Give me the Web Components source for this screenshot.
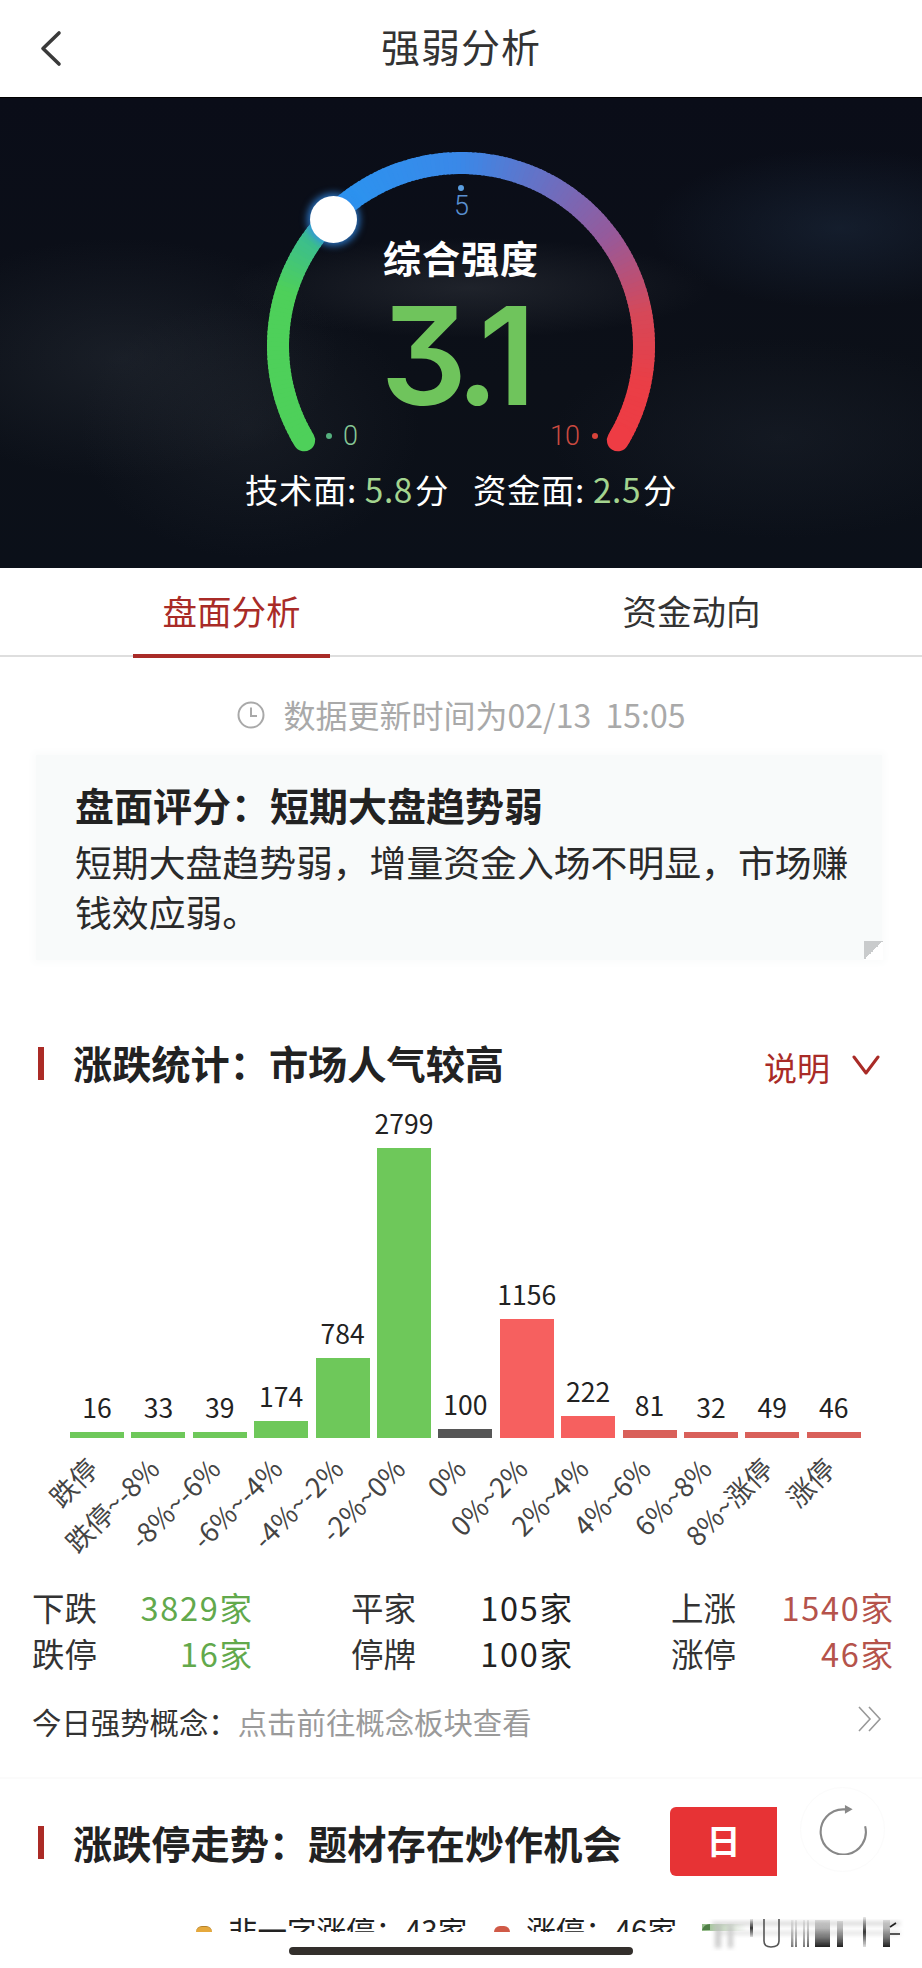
<!DOCTYPE html>
<html lang="zh-CN">
<head>
<meta charset="utf-8">
<title>强弱分析</title>
<style>
html,body{margin:0;padding:0;background:#fff}
body{width:922px;height:1968px;overflow:hidden;font-family:"Noto Sans CJK SC","Noto Sans",sans-serif;color:#222}
</style>
</head>
<body>
<app-header>强弱分析</app-header>
<strength-gauge></strength-gauge>
<tab-bar></tab-bar>
<update-time>数据更新时间为02/13  15:05</update-time>
<score-card heading="盘面评分：短期大盘趋势弱">短期大盘趋势弱，增量资金入场不明显，市场赚钱效应弱。</score-card>
<section-head style="margin-top:78px">涨跌统计：市场人气较高<explain-toggle slot="side"></explain-toggle></section-head>
<updown-chart></updown-chart>
<stats-grid></stats-grid>
<concept-link></concept-link>
<section-head class="second" style="margin-top:28px;height:69px" nudge="1">涨跌停走势：题材存在炒作机会<period-controls slot="side"></period-controls></section-head>
<legend-strip></legend-strip>
<home-bar></home-bar>

<script>
function define(tag, css, html, init){
  customElements.define(tag, class extends HTMLElement{
    constructor(){
      super();
      this.attachShadow({mode:'open'}).innerHTML = '<style>'+css+'</style>'+(typeof html==='function'?html():html);
    }
    connectedCallback(){ if(init) init(this, this.shadowRoot); }
  });
}

define('app-header',
  ':host{display:grid;grid-template-columns:1fr auto 1fr;align-items:center;height:97px;background:#fff}'+
  '.back{padding-left:39px;display:flex}'+
  '.t{font-size:39px;line-height:91px;padding-bottom:6px;color:#333;letter-spacing:1px}',
  '<div class="back"><svg width="24" height="38" viewBox="0 0 24 38"><path d="M20 3 L4 18.5 L20 34" fill="none" stroke="#3a3a3a" stroke-width="3.6" stroke-linecap="round" stroke-linejoin="round"/></svg></div><div class="t"><slot></slot></div><div></div>');

define('strength-gauge',
  ':host{display:flex;flex-direction:column;align-items:center;position:relative;height:471px;box-sizing:border-box;padding-top:134px;overflow:hidden;color:#fff;'+
  'background:radial-gradient(ellipse 240px 50px at 470px 190px,rgba(76,80,86,.30),transparent),'+
  'radial-gradient(ellipse 220px 120px at 120px 260px,rgba(60,68,78,.28),transparent),'+
  'radial-gradient(ellipse 190px 80px at 840px 130px,rgba(38,58,84,.34),transparent),'+
  'radial-gradient(ellipse 230px 100px at 780px 340px,rgba(42,50,62,.26),transparent),'+
  'radial-gradient(ellipse 170px 130px at 250px 330px,rgba(54,60,68,.24),transparent),'+
  'linear-gradient(#0a0d18,#0c1018 60%,#0b1019);border-top:1px solid #000}'+
  'svg{position:absolute;left:0;top:0}'+
  '.name{font-size:38px;font-weight:700;line-height:50px;position:relative;letter-spacing:1px}'+
  '.score{font-family:Inter,"Noto Sans",sans-serif;font-feature-settings:"cv09";font-weight:600;font-size:136px;line-height:110px;margin-top:19px;color:#6fc45c;letter-spacing:-8.5px;position:relative;padding-right:14px}'+
  '.foot{margin-top:58px;font-size:33.4px;line-height:40px;display:flex;gap:24px;position:relative;letter-spacing:.6px;white-space:nowrap}'+
  '.foot b{font-weight:400;color:#a3d48f;margin:0 2px 0 0}'+
  '.tick{position:absolute;font-family:Roboto,sans-serif;font-weight:300;font-size:27px;line-height:30px}'+
  '.dot{position:absolute;width:6px;height:6px;border-radius:50%}'+
  '.knob{position:absolute;left:310px;top:98px;width:47px;height:47px;border-radius:50%;background:#fff;box-shadow:0 0 7px 3px rgba(50,140,235,.75)}',
  function(){
    var cx=461,cy=248,r=183,start=180-31,sweep=242,n=180,stops=[[0,[78,208,90]],[.2,[78,208,90]],[.27,[60,190,140]],[.33,[42,148,240]],[.5,[58,136,232]],[.62,[108,110,192]],[.72,[150,90,155]],[.83,[214,72,88]],[.92,[234,62,70]],[1,[238,60,68]]];
    function col(t){for(var i=1;i<stops.length;i++){if(t<=stops[i][0]){var a=stops[i-1],b=stops[i],k=(t-a[0])/(b[0]-a[0]);return 'rgb('+a[1].map(function(v,j){return Math.round(v+(b[1][j]-v)*k)}).join(',')+')'}}return 'rgb(238,60,68)'}
    function pt(d){var a=d*Math.PI/180;return (cx+r*Math.cos(a)).toFixed(2)+' '+(cy+r*Math.sin(a)).toFixed(2)}
    var s='';
    for(var i=0;i<n;i++){
      var a0=start+sweep*i/n,a1=start+sweep*(i+1.4)/n;
      if(i==n-1)a1=start+sweep;
      s+='<path d="M'+pt(a0)+' A'+r+' '+r+' 0 0 1 '+pt(a1)+'" stroke="'+col((i+.5)/n)+'" stroke-width="22" fill="none"'+((i==0||i==n-1)?' stroke-linecap="round"':'')+'/>';
    }
    return '<svg width="922" height="471">'+s+'</svg>'+
      '<span class="dot" style="left:458px;top:87px;background:#5a9ee0"></span>'+
      '<span class="tick" style="left:454px;top:93px;color:#5a90d0">5</span>'+
      '<span class="dot" style="left:326px;top:335px;background:#55b07e"></span>'+
      '<span class="tick" style="left:343px;top:323px;color:#86c796">0</span>'+
      '<span class="tick" style="left:550px;top:323px;color:#cb4a40">10</span>'+
      '<span class="dot" style="left:592px;top:335px;background:#d8433a"></span>'+
      '<div class="knob"></div>'+
      '<div class="name">综合强度</div><div class="score">3.1</div>'+
      '<div class="foot"><span>技术面: <b>5.8</b>分</span><span>资金面: <b>2.5</b>分</span></div>';
  });

define('tab-bar',
  ':host{display:grid;grid-template-columns:1fr 1fr;height:89px;box-sizing:border-box;border-bottom:2px solid #dedede;background:#fff}'+
  '.c{display:flex;justify-content:center}'+
  'span{display:block;width:197px;height:87px;box-sizing:content-box;text-align:center;font-size:34.5px;line-height:84px;color:#333}'+
  '.on{color:#a92b27;height:86px;border-bottom:4px solid #a92b27;margin:0 0 -3px 2px}',
  '<div class="c"><span class="on">盘面分析</span></div><div class="c"><span>资金动向</span></div>');

define('update-time',
  ':host{display:flex;justify-content:center;align-items:center;gap:19px;margin-top:36px;height:44px;font-size:32px;color:#a9a9a9;white-space:pre}'+
  'div{padding-bottom:2px}',
  '<svg width="28" height="28" viewBox="0 0 28 28" fill="none" stroke="#a9a9a9" stroke-width="2"><circle cx="14" cy="14" r="12.5"/><path d="M14 6.5V15H20"/></svg><div><slot></slot></div>');

define('score-card',
  ':host{display:block;position:relative;margin:18px 40px 0 36px;height:205px;box-sizing:border-box;padding:24px 0 0 39px;background:#f8fafa;box-shadow:0 0 7px 4px #fbfcfc}'+
  '.h{font-size:39px;font-weight:700;line-height:50px;color:#222;white-space:nowrap}'+
  '.b{font-size:36.85px;line-height:50px;margin-top:7px;width:780px;color:#2a2a2a}'+
  '.tri{position:absolute;right:-1px;bottom:0;width:19px;height:19px;background:linear-gradient(135deg,#c9cbcc 50%,#fff 50%)}',
  '<div class="h" id="h"></div><div class="b"><slot></slot></div><div class="tri"></div>',
  function(el,sh){sh.getElementById('h').textContent=el.getAttribute('heading')});

define('section-head',
  ':host{display:flex;align-items:center;height:50px;padding:0 0 0 38px;background:#fff}'+
  '.bar{width:6px;height:33px;background:#ab2b26;margin-right:29px;flex:none}'+
  '.t{font-size:39.2px;font-weight:700;line-height:50px;padding-bottom:2px;color:#222;white-space:nowrap;flex:1}',
  '<div class="bar" id="b"></div><div class="t" id="t"><slot></slot></div><slot name="side"></slot>',
  function(el,sh){var n=el.getAttribute('nudge'); if(n){sh.getElementById('b').style.marginTop=n*2+'px';sh.getElementById('t').style.marginTop=n*2+'px'}});

define('explain-toggle',
  ':host{display:flex;align-items:center;gap:22px;padding:7px 42px 0 0;color:#a92b27;font-size:33px;line-height:40px}',
  '<span>说明</span><svg width="28" height="22" viewBox="0 0 28 22" fill="none" stroke="#a92b27" stroke-width="3" stroke-linecap="round" stroke-linejoin="round" style="margin-top:-2px"><path d="M2 2L14 18L26 2"/></svg>');

define('updown-chart',
  ':host{display:block}'+
  '.bars,.labs{display:flex;gap:7.4px;padding-left:70px}'+
  '.bars{height:350px;align-items:flex-end}'+
  '.col{width:54px;display:flex;flex-direction:column;align-items:center}'+
  '.v{font-size:26.5px;line-height:32px;margin-bottom:9.5px;color:#222;white-space:nowrap}'+
  '.bar{width:54px}'+
  '.labs{height:146px}'+
  '.lab{width:54px;display:flex;justify-content:flex-end;padding:6px 24px 0 0;box-sizing:border-box;height:60px}'+
  '.lab span{flex:none;font-size:27px;line-height:32px;color:#444;white-space:nowrap;transform:rotate(-45deg);transform-origin:100% 50%}',
  function(){
    var G='#6ec85a',R='#f6605f',D='#d9605a',K='#565656';
    var d=[[16,6,G,'跌停'],[33,6,G,'跌停~-8%'],[39,6,G,'-8%~-6%'],[174,17,G,'-6%~-4%'],[784,80,G,'-4%~-2%'],[2799,290,G,'-2%~0%'],[100,9,K,'0%'],[1156,119,R,'0%~2%'],[222,22,R,'2%~4%'],[81,8,D,'4%~6%'],[32,6,D,'6%~8%'],[49,6,D,'8%~涨停'],[46,6,D,'涨停']];
    return '<div class="bars">'+d.map(function(x){return '<div class="col"><div class="v">'+x[0]+'</div><div class="bar" style="height:'+x[1]+'px;background:'+x[2]+'"></div></div>'}).join('')+'</div>'+
      '<div class="labs">'+d.map(function(x){return '<div class="lab"><span>'+x[3]+'</span></div>'}).join('')+'</div>';
  }());

define('stats-grid',
  ':host{display:grid;grid-template-columns:220px 221px 222px;column-gap:99px;padding-left:32px;font-size:32.5px;line-height:46px;color:#333}'+
  '.r{display:flex;justify-content:space-between;white-space:nowrap}'+
  'i{font-style:normal;letter-spacing:1.7px}'+
  '.g{color:#62a94c}.k{color:#222}.e{color:#b5534b}',
  function(){
    var d=[['下跌','3829','g'],['平家','105','k'],['上涨','1540','e'],['跌停','16','g'],['停牌','100','k'],['涨停','46','e']];
    return d.map(function(x){return '<div class="r"><span>'+x[0]+'</span><span class="'+x[2]+'"><i>'+x[1]+'</i>家</span></div>'}).join('');
  }());

define('concept-link',
  ':host{display:flex;align-items:center;margin-top:25px;height:40px;padding:0 40px 36px 32px;font-size:29.4px;line-height:40px;color:#333;border-bottom:2px solid #fbfbfb}'+
  '.g{color:#9a9a9a;flex:1}',
  '<span>今日强势概念：</span><span class="g">点击前往概念板块查看</span><svg width="24" height="26" viewBox="0 0 24 26" fill="none" stroke="#999" stroke-width="1.6" style="margin-top:-4px"><path d="M1 1L12 13L1 25M11 1L22 13L11 25"/></svg>');

define('period-controls',
  ':host{display:flex;align-items:center;padding-right:37px}'+
  '.btn{width:107px;height:69px;background:#e73335;border-radius:6px 0 0 6px;color:#fff;font-size:34px;font-weight:700;line-height:66px;text-align:center}'+
  '.ref{width:85px;height:85px;margin-left:23px;margin-top:-24px;border-radius:50%;border:1px solid #fbfbfb;box-sizing:border-box;display:flex;align-items:center;justify-content:center}',
  '<div class="btn">日</div><div class="ref"><svg width="50" height="50" viewBox="0 0 52 52" fill="none"><path d="M49 22A23.5 23.5 0 1 1 26 4.5L30 4.5" stroke="#888" stroke-width="2.2"/><path d="M28 0L36 4.5L28 9Z" fill="#888"/></svg></div>');

define('legend-strip',
  ':host{display:block;position:relative;margin-top:42px;height:14px;padding-left:196px}'+
  '.row{display:flex;height:14px;overflow:hidden;font-size:29.5px;line-height:30px;color:#222;white-space:nowrap}'+
  '.d{width:16px;height:6px;margin:8px 16px 0 0;border-radius:8px 8px 0 0;flex:none}'+
  '.t{margin-right:27px;margin-top:-4px}'+
  'svg{position:absolute;left:700px;top:-6px}',
  '<div class="row"><span class="d" style="background:#e6a93c;border-top:1px solid #b5822a;box-sizing:border-box"></span><span class="t">非一字涨停：43家</span><span class="d" style="background:#d05a47"></span><span class="t">涨停：46家</span></div>'+
  '<svg width="222" height="42" viewBox="0 0 222 42"><defs><linearGradient id="gr" x1="0" x2="1"><stop offset="0" stop-color="#6aa05a" stop-opacity=".75"/><stop offset="1" stop-color="#8fb585" stop-opacity="0"/></linearGradient><linearGradient id="v" x1="0" y1="0" x2="0" y2="1"><stop offset="0" stop-color="#888" stop-opacity=".25"/><stop offset="1" stop-color="#111" stop-opacity=".95"/></linearGradient><linearGradient id="h" x1="0" y1="0" x2="0" y2="1"><stop offset="0" stop-color="#222" stop-opacity=".1"/><stop offset=".5" stop-color="#222" stop-opacity=".9"/><stop offset="1" stop-color="#222" stop-opacity=".15"/></linearGradient><filter id="b"><feGaussianBlur stdDeviation="0.7"/></filter><filter id="b2"><feGaussianBlur stdDeviation="2.2"/></filter></defs>'+
  '<rect x="2" y="12" width="45" height="7" fill="url(#gr)"/><path d="M2 18Q4 12 10 12V18Z" fill="#4f7f46"/>'+
  '<g filter="url(#b2)" fill="#bbb" opacity=".75"><rect x="12" y="10" width="188" height="3"/><rect x="20" y="20" width="180" height="2"/><rect x="15" y="14" width="6" height="22"/><rect x="28" y="14" width="5" height="22"/></g>'+
  '<g filter="url(#b)"><rect x="50" y="7" width="3" height="18" fill="url(#h)"/><path d="M64 7V29Q64 35 71 35Q79 35 79 29V7" fill="none" stroke="#555" stroke-width="1.6"/><rect x="91" y="8" width="2.4" height="27" fill="url(#v)" opacity=".6"/><rect x="95" y="8" width="2" height="27" fill="url(#v)" opacity=".6"/><rect x="103" y="8" width="2" height="27" fill="url(#v)" opacity=".6"/><rect x="107" y="8" width="2" height="27" fill="url(#v)" opacity=".7"/><rect x="115" y="8" width="15" height="27" fill="url(#v)"/><rect x="137" y="9" width="6" height="26" fill="url(#v)"/><rect x="163" y="5" width="3" height="30" fill="url(#h)"/><rect x="183" y="8" width="7" height="27" fill="url(#v)"/><path d="M190 15L196 11M190 22H200" stroke="#222" stroke-width="1.6" fill="none"/></g></svg>');

define('home-bar',
  ':host{display:block;width:344px;height:8px;margin:15px auto 0;background:#332f2c;border-radius:4px}','');
</script>
</body>
</html>
